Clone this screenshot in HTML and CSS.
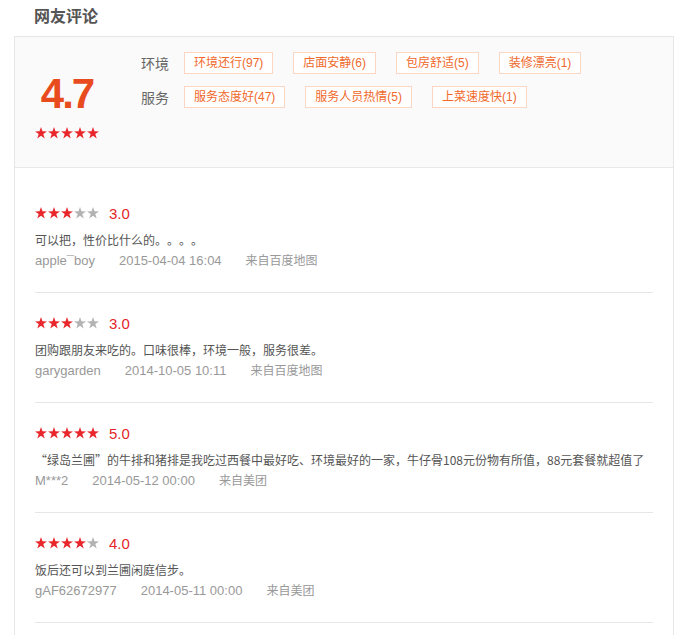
FILE: index.html
```html
<!DOCTYPE html>
<html lang="zh-CN">
<head>
<meta charset="utf-8">
<link rel="stylesheet" href="styles.css">
</head>
<body>
<div class="comments">
  <h2 class="comments-title">网友评论</h2>
  <div class="comments-box">
    <div class="summary">
      <div class="score">
        <div class="score-num">4.7</div>
        <div class="stars"><i class="star"></i><i class="star"></i><i class="star"></i><i class="star"></i><i class="star"></i></div>
      </div>
      <div class="tag-groups">
        <div class="tag-row">
          <span class="tag-label">环境</span>
          <span class="tag">环境还行(97)</span>
          <span class="tag">店面安静(6)</span>
          <span class="tag">包房舒适(5)</span>
          <span class="tag">装修漂亮(1)</span>
        </div>
        <div class="tag-row">
          <span class="tag-label">服务</span>
          <span class="tag">服务态度好(47)</span>
          <span class="tag">服务人员热情(5)</span>
          <span class="tag">上菜速度快(1)</span>
        </div>
      </div>
    </div>
    <ul class="review-list">
      <li class="review">
        <div class="review-rate">
          <span class="stars"><i class="star"></i><i class="star"></i><i class="star"></i><i class="star off"></i><i class="star off"></i></span>
          <span class="review-score">3.0</span>
        </div>
        <p class="review-text">可以把，性价比什么的。。。。</p>
        <div class="review-meta"><span class="user">apple¯boy</span><span class="time">2015-04-04 16:04</span><span class="from">来自百度地图</span></div>
      </li>
      <li class="review">
        <div class="review-rate">
          <span class="stars"><i class="star"></i><i class="star"></i><i class="star"></i><i class="star off"></i><i class="star off"></i></span>
          <span class="review-score">3.0</span>
        </div>
        <p class="review-text">团购跟朋友来吃的。口味很棒，环境一般，服务很差。</p>
        <div class="review-meta"><span class="user">garygarden</span><span class="time">2014-10-05 10:11</span><span class="from">来自百度地图</span></div>
      </li>
      <li class="review">
        <div class="review-rate">
          <span class="stars"><i class="star"></i><i class="star"></i><i class="star"></i><i class="star"></i><i class="star"></i></span>
          <span class="review-score">5.0</span>
        </div>
        <p class="review-text">“绿岛兰圃”的牛排和猪排是我吃过西餐中最好吃、环境最好的一家，牛仔骨108元份物有所值，88元套餐就超值了</p>
        <div class="review-meta"><span class="user">M***2</span><span class="time">2014-05-12 00:00</span><span class="from">来自美团</span></div>
      </li>
      <li class="review">
        <div class="review-rate">
          <span class="stars"><i class="star"></i><i class="star"></i><i class="star"></i><i class="star"></i><i class="star off"></i></span>
          <span class="review-score">4.0</span>
        </div>
        <p class="review-text">饭后还可以到兰圃闲庭信步。</p>
        <div class="review-meta"><span class="user">gAF62672977</span><span class="time">2014-05-11 00:00</span><span class="from">来自美团</span></div>
      </li>
    </ul>
  </div>
</div>
</body>
</html>
```

FILE: styles.css
```css
* {box-sizing: border-box;}
body {margin: 0; background: #fff; font-family: "Liberation Sans", "Noto Sans CJK SC", sans-serif; color: #666;}
.comments {padding: 0 0 0 14px;}
.comments-title {margin: 0 0 2px; padding-left: 20px; height: 34px; line-height: 34px; font-size: 16px; font-weight: bold; color: #555;}
.comments-box {width: 660px; border: 1px solid #e6e6e6;}

/* summary */
.summary {display: flex; height: 131px; padding: 15px 20px 0; background: #fafafa; border-bottom: 1px solid #e8e8e8;}
.score {width: 64px; padding-top: 21px; text-align: center;}
.score-num {font-size: 42px; line-height: 42px; font-weight: bold; letter-spacing: -2px; color: #e84c1e;}
.score .stars {margin-top: 12px;}
.stars {display: flex; height: 12px;}
.star {display: block; width: 12px; height: 12px; margin-right: 1px; background: #e8262b;
  clip-path: polygon(50% 0%, 62% 36%, 100% 37%, 69% 59%, 81% 96%, 50% 73%, 19% 96%, 31% 59%, 0% 37%, 38% 36%);}
.star:last-child {margin-right: 0;}
.star.off {background: #b3b3b3;}
.tag-groups {margin-left: 42px;}
.tag-row {display: flex; align-items: center; height: 22px; margin-bottom: 12px;}
.tag-label {font-size: 14px; color: #666; margin-right: 15px;}
.tag {height: 22px; line-height: 20px; padding: 0 9px; margin-right: 20px; border: 1px solid #fbd7c3; font-size: 12px; color: #f0692b; background: #fff;}

/* reviews */
.review-list {margin: 0; padding: 15px 20px 20px; list-style: none;}
.review {padding: 19px 0 21px; border-bottom: 1px solid #e6e6e6;}
.review-rate {display: flex; align-items: center; height: 22px;}
.review-score {margin-left: 10px; font-size: 15px; color: #e4262a;}
.review-text {margin: 5px 0 0; line-height: 22px; font-family: "Noto Sans CJK SC", sans-serif; font-size: 12px; color: #555; white-space: nowrap; text-spacing-trim: space-all;}
.review-meta {line-height: 20px; font-size: 13px; color: #999;}
.review-meta .user, .review-meta .time {margin-right: 24px;}
.review-meta .from {font-size: 12px;}
```
